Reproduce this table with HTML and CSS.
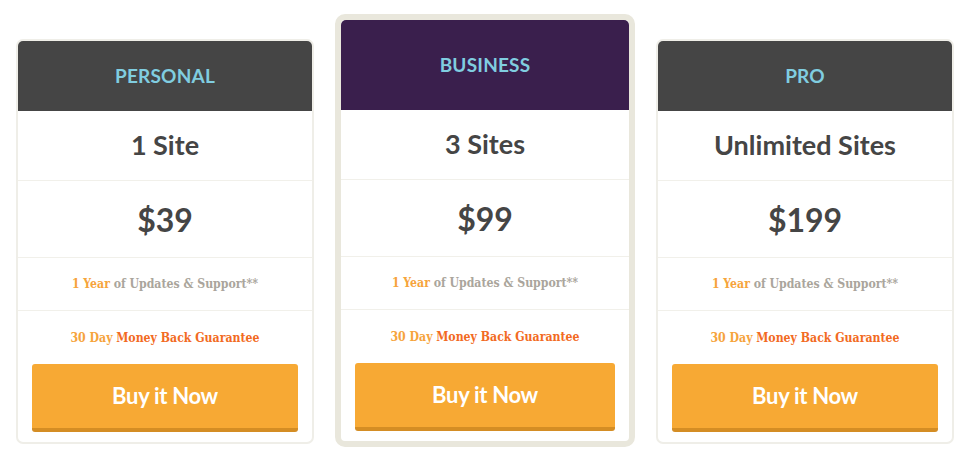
FILE: index.html
```html
<!DOCTYPE html>
<html lang="en">
<head>
<meta charset="utf-8">
<title>Pricing</title>
<link rel="stylesheet" href="styles.css">
</head>
<body>
<div class="plans">
  <div class="plan">
    <div class="plan-head"><h2 class="plan-name">PERSONAL</h2></div>
    <div class="plan-row plan-sites">1 Site</div>
    <div class="plan-row plan-price">$39</div>
    <div class="plan-row plan-feature"><span class="hl">1 Year</span> of Updates &amp; Support**</div>
    <div class="plan-guarantee"><span class="hl">30 Day</span> Money Back Guarantee</div>
    <div class="plan-cta"><a class="btn" href="#">Buy it Now</a></div>
  </div>
  <div class="plan plan-featured">
    <div class="plan-head"><h2 class="plan-name">BUSINESS</h2></div>
    <div class="plan-row plan-sites">3 Sites</div>
    <div class="plan-row plan-price">$99</div>
    <div class="plan-row plan-feature"><span class="hl">1 Year</span> of Updates &amp; Support**</div>
    <div class="plan-guarantee"><span class="hl">30 Day</span> Money Back Guarantee</div>
    <div class="plan-cta"><a class="btn" href="#">Buy it Now</a></div>
  </div>
  <div class="plan">
    <div class="plan-head"><h2 class="plan-name">PRO</h2></div>
    <div class="plan-row plan-sites">Unlimited Sites</div>
    <div class="plan-row plan-price">$199</div>
    <div class="plan-row plan-feature"><span class="hl">1 Year</span> of Updates &amp; Support**</div>
    <div class="plan-guarantee"><span class="hl">30 Day</span> Money Back Guarantee</div>
    <div class="plan-cta"><a class="btn" href="#">Buy it Now</a></div>
  </div>
</div>
</body>
</html>
```

FILE: styles.css
```css
html, body {
  margin: 0;
  padding: 0;
  background: #ffffff;
}

.plans {
  display: flex;
  align-items: flex-start;
  gap: 21px;
  padding: 14px 0 0 16px;
  font-family: "Lato", "DejaVu Sans", sans-serif;
}

.plan {
  width: 298px;
  box-sizing: border-box;
  margin-top: 25px;
  border: 2px solid #efeee8;
  border-radius: 7px;
  background: #ffffff;
  display: flex;
  flex-direction: column;
}

.plan-featured {
  width: 300px;
  margin-top: 0;
  border: 6px solid #e9e7dc;
  border-radius: 10px;
}

.plan-head {
  height: 70px;
  background: #454545;
  border-radius: 5px 5px 0 0;
  display: flex;
  align-items: center;
  justify-content: center;
}

.plan-featured .plan-head {
  height: 90px;
  background: #3a1f4d;
  border-radius: 5px 5px 0 0;
}

.plan-name {
  margin: 0 0 2px;
  font-size: 19px;
  font-weight: 700;
  color: #80cde0;
  letter-spacing: 0.2px;
}

.plan-row {
  display: flex;
  align-items: center;
  justify-content: center;
  border-bottom: 1px solid #f1f0ea;
  color: #454545;
}

.plan-sites {
  height: 66px;
  padding-bottom: 3px;
  font-size: 27px;
  font-weight: 700;
}

.plan-price {
  height: 76px;
  font-size: 32px;
  font-weight: 700;
}

.plan-feature {
  height: 52px;
  font-family: "DejaVu Serif", serif;
  font-stretch: condensed;
  font-size: 12.2px;
  font-weight: 700;
  color: #aaa59c;
}

.plan-feature .hl {
  color: #f6a43c;
  margin-right: 0.3em;
}

.plan-guarantee {
  height: 53px;
  display: flex;
  align-items: center;
  justify-content: center;
  font-family: "DejaVu Serif", serif;
  font-stretch: condensed;
  font-size: 12.2px;
  font-weight: 700;
  color: #f26a22;
}

.plan-guarantee .hl {
  color: #f6a43c;
  margin-right: 0.3em;
}

.plan-cta {
  padding: 0 14px 10px;
}

.btn {
  display: flex;
  align-items: center;
  justify-content: center;
  height: 62px;
  padding-bottom: 2px;
  border-bottom: 4px solid #d48d24;
  border-radius: 3px;
  background: #f7a934;
  color: #ffffff;
  font-size: 22px;
  font-weight: 700;
  letter-spacing: -0.3px;
  text-decoration: none;
}
```
